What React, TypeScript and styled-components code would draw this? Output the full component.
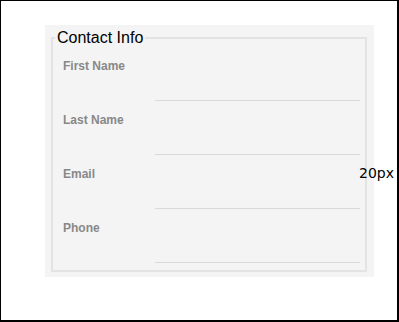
import React from "react";
import styled, { createGlobalStyle } from "styled-components";

const Global = createGlobalStyle`
  html, body { margin: 0; padding: 0; background: #fff; }
  body { font-family: "Liberation Sans", Arial, sans-serif; }
  * { box-sizing: border-box; }
`;

const Frame = styled.div`
  position: relative;
  width: 399px;
  height: 322px;
  border-style: solid;
  border-color: #000;
  border-width: 1px 2px 2px 1px;
  padding: 24px 0 0 44px;
`;

const Panel = styled.div`
  width: 329px;
  background: #f4f4f4;
  padding: 4px 7px 5px 6px;
`;

const Fieldset = styled.fieldset`
  margin: 0;
  padding: 0;
  border: 2px solid #e3e3e3;
  min-width: 0;
`;

const Legend = styled.legend`
  margin-left: 2px;
  padding: 0 2px;
  font-size: 16px;
  color: #000;
`;

const Rows = styled.div`
  display: flex;
  flex-direction: column;
  gap: 12px;
  padding: 12px 0 7px 10px;
`;

const Row = styled.div`
  display: flex;
  align-items: flex-start;
`;

const Label = styled.label`
  width: 92px;
  flex: none;
  font-size: 12px;
  font-weight: bold;
  color: #888;
`;

const Input = styled.input`
  width: 205px;
  height: 42px;
  flex: none;
  border: none;
  border-bottom: 1px solid #d9d9d9;
  background: transparent;
  padding: 0;
  outline: none;
`;

const SizeNote = styled.span`
  position: absolute;
  left: 358px;
  top: 164px;
  font-family: "DejaVu Sans", sans-serif;
  font-size: 14px;
  color: #000;
`;

const fields = ["First Name", "Last Name", "Email", "Phone"];

export default function App() {
  return (
    <>
      <Global />
      <Frame>
        <Panel>
          <Fieldset>
            <Legend>Contact Info</Legend>
            <Rows>
              {fields.map((f) => (
                <Row key={f}>
                  <Label>{f}</Label>
                  <Input type="text" />
                </Row>
              ))}
            </Rows>
          </Fieldset>
        </Panel>
        <SizeNote>20px</SizeNote>
      </Frame>
    </>
  );
}
